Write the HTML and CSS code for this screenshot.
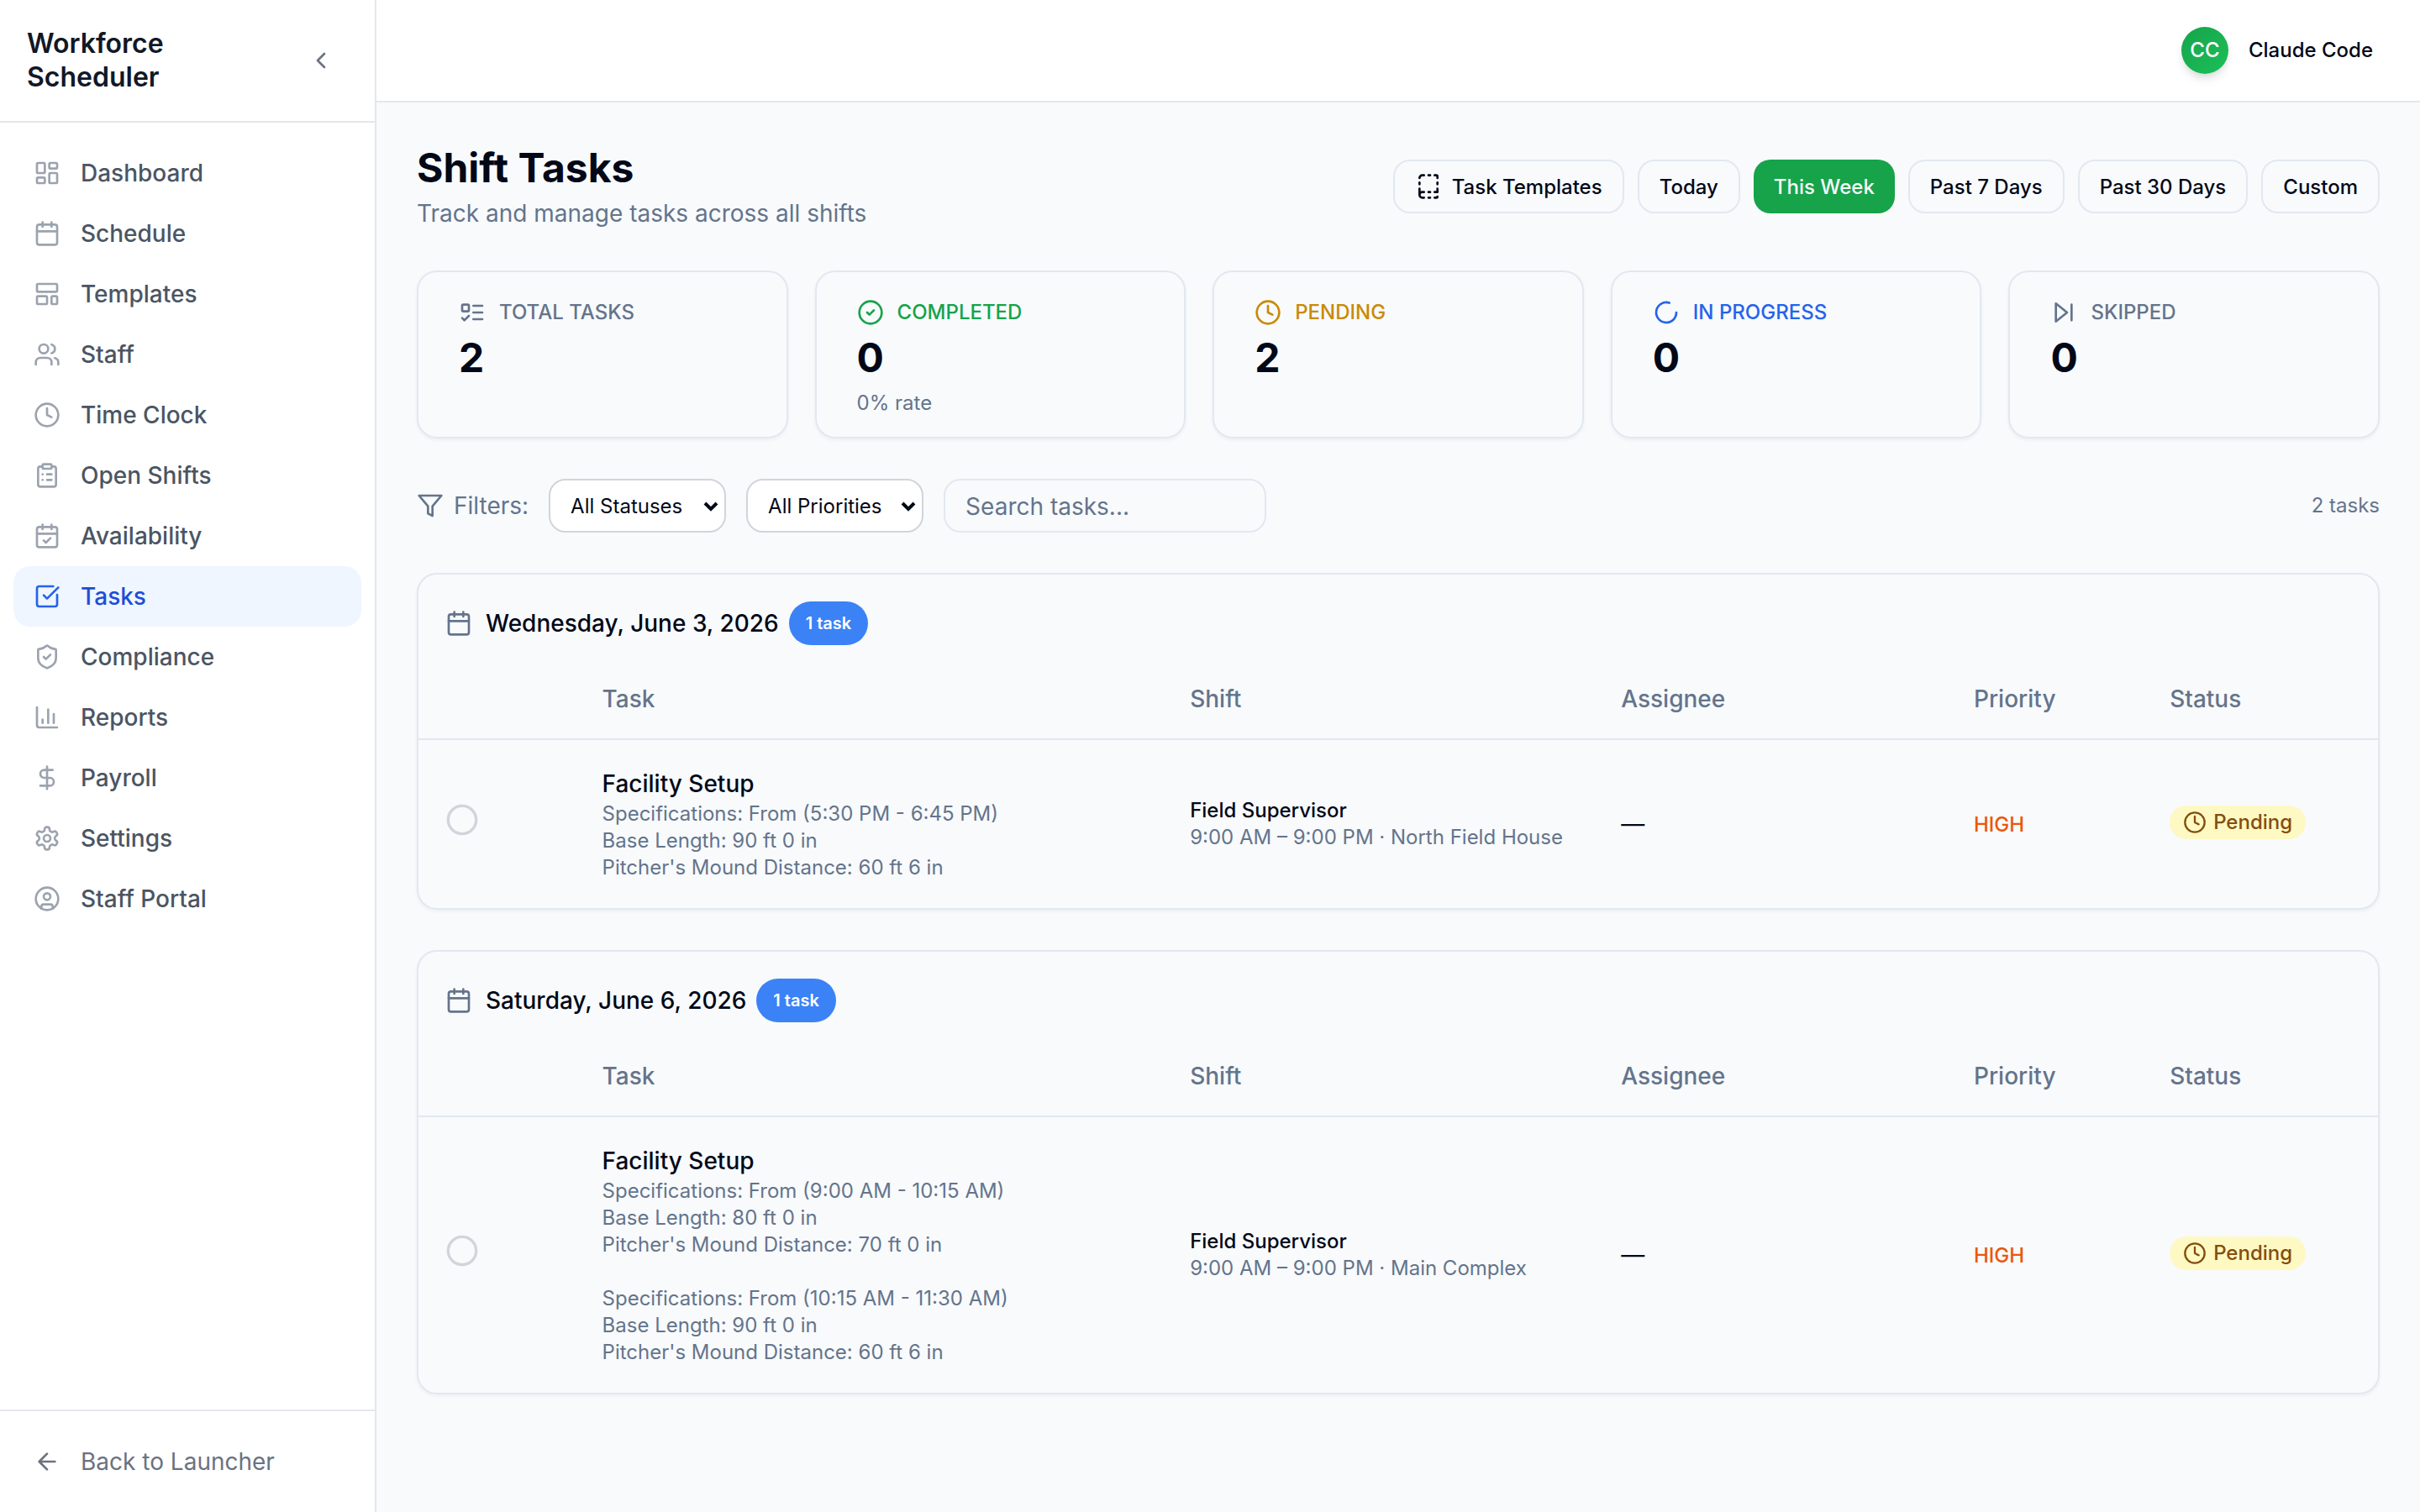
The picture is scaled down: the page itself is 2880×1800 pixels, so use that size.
FILE: index.html
```html
<!DOCTYPE html>
<html lang="en">
<head>
    <meta charset="UTF-8">
    <meta name="viewport" content="width=device-width, initial-scale=1.0">
    <title>Shift Tasks - Workforce Scheduler</title>
    <link rel="stylesheet" href="styles.css">
</head>
<body>
    <!-- Icons shared by more than one place -->
    <svg class="sprite" aria-hidden="true">
        <symbol id="icon-calendar" viewBox="0 0 24 24">
            <path d="M8 2v4M16 2v4M3 10h18"/>
            <rect x="3" y="4" width="18" height="18" rx="2"/>
        </symbol>
        <symbol id="icon-clock" viewBox="0 0 24 24">
            <circle cx="12" cy="12" r="10"/>
            <path d="M12 6v6l4 2"/>
        </symbol>
        <symbol id="icon-circle" viewBox="0 0 24 24">
            <circle cx="12" cy="12" r="10"/>
        </symbol>
    </svg>

    <div class="app">
        <aside class="sidebar">
            <div class="sidebar-header">
                <div class="brand">Workforce Scheduler</div>
                <button class="collapse-button" aria-label="Collapse sidebar">
                    <svg class="icon" viewBox="0 0 24 24"><path d="m15 18-6-6 6-6"/></svg>
                </button>
            </div>

            <nav class="nav">
                <a href="#" class="nav-link">
                    <svg class="icon" viewBox="0 0 24 24"><rect x="3" y="3" width="7" height="9" rx="1"/><rect x="14" y="3" width="7" height="5" rx="1"/><rect x="14" y="12" width="7" height="9" rx="1"/><rect x="3" y="16" width="7" height="5" rx="1"/></svg>
                    Dashboard
                </a>
                <a href="#" class="nav-link">
                    <svg class="icon"><use href="#icon-calendar"/></svg>
                    Schedule
                </a>
                <a href="#" class="nav-link">
                    <svg class="icon" viewBox="0 0 24 24"><rect x="3" y="3" width="18" height="7" rx="1"/><rect x="3" y="14" width="9" height="7" rx="1"/><rect x="16" y="14" width="5" height="7" rx="1"/></svg>
                    Templates
                </a>
                <a href="#" class="nav-link">
                    <svg class="icon" viewBox="0 0 24 24"><path d="M16 21v-2a4 4 0 0 0-4-4H6a4 4 0 0 0-4 4v2"/><circle cx="9" cy="7" r="4"/><path d="M22 21v-2a4 4 0 0 0-3-3.87M16 3.13a4 4 0 0 1 0 7.75"/></svg>
                    Staff
                </a>
                <a href="#" class="nav-link">
                    <svg class="icon"><use href="#icon-clock"/></svg>
                    Time Clock
                </a>
                <a href="#" class="nav-link">
                    <svg class="icon" viewBox="0 0 24 24"><rect x="8" y="2" width="8" height="4" rx="1"/><path d="M16 4h2a2 2 0 0 1 2 2v14a2 2 0 0 1-2 2H6a2 2 0 0 1-2-2V6a2 2 0 0 1 2-2h2M12 11h4M12 16h4M8 11h.01M8 16h.01"/></svg>
                    Open Shifts
                </a>
                <a href="#" class="nav-link">
                    <svg class="icon" viewBox="0 0 24 24"><path d="M8 2v4M16 2v4M3 10h18"/><rect x="3" y="4" width="18" height="18" rx="2"/><path d="m9 16 2 2 4-4"/></svg>
                    Availability
                </a>
                <a href="#" class="nav-link active" aria-current="page">
                    <svg class="icon" viewBox="0 0 24 24"><path d="M21 10.5V19a2 2 0 0 1-2 2H5a2 2 0 0 1-2-2V5a2 2 0 0 1 2-2h12.5"/><path d="m9 11 3 3L22 4"/></svg>
                    Tasks
                </a>
                <a href="#" class="nav-link">
                    <svg class="icon" viewBox="0 0 24 24"><path d="M20 13c0 5-3.5 7.5-7.66 8.95a1 1 0 0 1-.67-.01C7.5 20.5 4 18 4 13V6a1 1 0 0 1 1-1c2 0 4.5-1.2 6.24-2.72a1.17 1.17 0 0 1 1.52 0C14.51 3.81 17 5 19 5a1 1 0 0 1 1 1z"/><path d="m9 12 2 2 4-4"/></svg>
                    Compliance
                </a>
                <a href="#" class="nav-link">
                    <svg class="icon" viewBox="0 0 24 24"><path d="M3 3v16a2 2 0 0 0 2 2h16M18 17V9M13 17V5M8 17v-3"/></svg>
                    Reports
                </a>
                <a href="#" class="nav-link">
                    <svg class="icon" viewBox="0 0 24 24"><path d="M12 2v20M17 5H9.5a3.5 3.5 0 0 0 0 7h5a3.5 3.5 0 0 1 0 7H6"/></svg>
                    Payroll
                </a>
                <a href="#" class="nav-link">
                    <svg class="icon" viewBox="0 0 24 24"><path d="M12.22 2h-.44a2 2 0 0 0-2 2v.18a2 2 0 0 1-1 1.73l-.43.25a2 2 0 0 1-2 0l-.15-.08a2 2 0 0 0-2.73.73l-.22.38a2 2 0 0 0 .73 2.73l.15.1a2 2 0 0 1 1 1.72v.51a2 2 0 0 1-1 1.74l-.15.09a2 2 0 0 0-.73 2.73l.22.38a2 2 0 0 0 2.73.73l.15-.08a2 2 0 0 1 2 0l.43.25a2 2 0 0 1 1 1.73V20a2 2 0 0 0 2 2h.44a2 2 0 0 0 2-2v-.18a2 2 0 0 1 1-1.73l.43-.25a2 2 0 0 1 2 0l.15.08a2 2 0 0 0 2.73-.73l.22-.39a2 2 0 0 0-.73-2.73l-.15-.08a2 2 0 0 1-1-1.74v-.5a2 2 0 0 1 1-1.74l.15-.09a2 2 0 0 0 .73-2.73l-.22-.38a2 2 0 0 0-2.73-.73l-.15.08a2 2 0 0 1-2 0l-.43-.25a2 2 0 0 1-1-1.73V4a2 2 0 0 0-2-2z"/><circle cx="12" cy="12" r="3"/></svg>
                    Settings
                </a>
                <a href="#" class="nav-link">
                    <svg class="icon" viewBox="0 0 24 24"><circle cx="12" cy="12" r="10"/><circle cx="12" cy="10" r="3"/><path d="M7 20.66V19a2 2 0 0 1 2-2h6a2 2 0 0 1 2 2v1.66"/></svg>
                    Staff Portal
                </a>
            </nav>

            <div class="sidebar-footer">
                <a href="#" class="back-link">
                    <svg class="icon" viewBox="0 0 24 24"><path d="m12 19-7-7 7-7M19 12H5"/></svg>
                    Back to Launcher
                </a>
            </div>
        </aside>

        <div class="main">
            <header class="topbar">
                <div class="avatar">CC</div>
                <div class="user-name">Claude Code</div>
            </header>

            <main class="content">
                <div class="page-header">
                    <div>
                        <h1>Shift Tasks</h1>
                        <p class="subtitle">Track and manage tasks across all shifts</p>
                    </div>
                    <div class="actions">
                        <button class="button">
                            <svg class="icon" viewBox="0 0 24 24"><path d="M12 17h1.5M12 22h1.5M12 2h1.5M17.5 22H19a1 1 0 0 0 1-1M17.5 2H19a1 1 0 0 1 1 1v1.5M20 14v3h-2.5M20 8.5V10M4 10V8.5M4 19.5V14M4 4.5A2.5 2.5 0 0 1 6.5 2H8M8 22H6.5a1 1 0 0 1 0-5H8"/></svg>
                            Task Templates
                        </button>
                        <button class="button">Today</button>
                        <button class="button primary">This Week</button>
                        <button class="button">Past 7 Days</button>
                        <button class="button">Past 30 Days</button>
                        <button class="button">Custom</button>
                    </div>
                </div>

                <div class="stats">
                    <div class="card stat">
                        <div class="stat-label">
                            <svg class="icon" viewBox="0 0 24 24"><rect x="3" y="5" width="6" height="6" rx="1"/><path d="m3 17 2 2 4-4M13 6h8M13 12h8M13 18h8"/></svg>
                            TOTAL TASKS
                        </div>
                        <div class="stat-value">2</div>
                    </div>
                    <div class="card stat">
                        <div class="stat-label green">
                            <svg class="icon" viewBox="0 0 24 24"><circle cx="12" cy="12" r="10"/><path d="m9 12 2 2 4-4"/></svg>
                            COMPLETED
                        </div>
                        <div class="stat-value">0</div>
                        <div class="stat-note">0% rate</div>
                    </div>
                    <div class="card stat">
                        <div class="stat-label yellow">
                            <svg class="icon"><use href="#icon-clock"/></svg>
                            PENDING
                        </div>
                        <div class="stat-value">2</div>
                    </div>
                    <div class="card stat">
                        <div class="stat-label blue">
                            <svg class="icon" viewBox="0 0 24 24"><path d="M21 12a9 9 0 1 1-6.22-8.56"/></svg>
                            IN PROGRESS
                        </div>
                        <div class="stat-value">0</div>
                    </div>
                    <div class="card stat">
                        <div class="stat-label">
                            <svg class="icon" viewBox="0 0 24 24"><path d="M5 4l10 8-10 8zM19 5v14"/></svg>
                            SKIPPED
                        </div>
                        <div class="stat-value">0</div>
                    </div>
                </div>

                <div class="filters">
                    <div class="filters-label">
                        <svg class="icon" viewBox="0 0 24 24"><path d="M22 3H2l8 9.46V19l4 2v-8.54z"/></svg>
                        Filters:
                    </div>
                    <div class="select-wrap">
                        <select aria-label="Status">
                            <option>All Statuses</option>
                            <option>Pending</option>
                            <option>In Progress</option>
                            <option>Completed</option>
                            <option>Skipped</option>
                        </select>
                        <svg class="select-arrow" viewBox="0 0 18 12"><path d="m2 2 7 7 7-7"/></svg>
                    </div>
                    <div class="select-wrap">
                        <select aria-label="Priority">
                            <option>All Priorities</option>
                            <option>High</option>
                            <option>Medium</option>
                            <option>Low</option>
                        </select>
                        <svg class="select-arrow" viewBox="0 0 18 12"><path d="m2 2 7 7 7-7"/></svg>
                    </div>
                    <input type="text" class="search" placeholder="Search tasks..." aria-label="Search tasks">
                    <div class="count">2 tasks</div>
                </div>

                <section class="card day">
                    <div class="day-header">
                        <svg class="icon"><use href="#icon-calendar"/></svg>
                        <h2>Wednesday, June 3, 2026</h2>
                        <span class="badge">1 task</span>
                    </div>
                    <table>
                        <thead>
                            <tr>
                                <th class="col-check"></th>
                                <th class="col-task">Task</th>
                                <th class="col-shift">Shift</th>
                                <th class="col-assignee">Assignee</th>
                                <th class="col-priority">Priority</th>
                                <th class="col-status">Status</th>
                            </tr>
                        </thead>
                        <tbody>
                            <tr>
                                <td><button class="check-button" aria-label="Mark complete"><svg><use href="#icon-circle"/></svg></button></td>
                                <td>
                                    <div class="task-name">Facility Setup</div>
                                    <div class="details">Specifications: From (5:30 PM - 6:45 PM)
Base Length: 90 ft 0 in
Pitcher's Mound Distance: 60 ft 6 in</div>
                                </td>
                                <td>
                                    <div class="shift-role">Field Supervisor</div>
                                    <div class="details">9:00 AM – 9:00 PM · North Field House</div>
                                </td>
                                <td>—</td>
                                <td><span class="priority">HIGH</span></td>
                                <td><span class="status"><svg class="icon"><use href="#icon-clock"/></svg>Pending</span></td>
                            </tr>
                        </tbody>
                    </table>
                </section>

                <section class="card day">
                    <div class="day-header">
                        <svg class="icon"><use href="#icon-calendar"/></svg>
                        <h2>Saturday, June 6, 2026</h2>
                        <span class="badge">1 task</span>
                    </div>
                    <table>
                        <thead>
                            <tr>
                                <th class="col-check"></th>
                                <th class="col-task">Task</th>
                                <th class="col-shift">Shift</th>
                                <th class="col-assignee">Assignee</th>
                                <th class="col-priority">Priority</th>
                                <th class="col-status">Status</th>
                            </tr>
                        </thead>
                        <tbody>
                            <tr>
                                <td><button class="check-button" aria-label="Mark complete"><svg><use href="#icon-circle"/></svg></button></td>
                                <td>
                                    <div class="task-name">Facility Setup</div>
                                    <div class="details">Specifications: From (9:00 AM - 10:15 AM)
Base Length: 80 ft 0 in
Pitcher's Mound Distance: 70 ft 0 in

Specifications: From (10:15 AM - 11:30 AM)
Base Length: 90 ft 0 in
Pitcher's Mound Distance: 60 ft 6 in</div>
                                </td>
                                <td>
                                    <div class="shift-role">Field Supervisor</div>
                                    <div class="details">9:00 AM – 9:00 PM · Main Complex</div>
                                </td>
                                <td>—</td>
                                <td><span class="priority">HIGH</span></td>
                                <td><span class="status"><svg class="icon"><use href="#icon-clock"/></svg>Pending</span></td>
                            </tr>
                        </tbody>
                    </table>
                </section>
            </main>
        </div>
    </div>
</body>
</html>
```
FILE: styles.css
```css
* {
    box-sizing: border-box;
}

body {
    margin: 0;
    font-family: Inter, "Liberation Sans", sans-serif;
    font-size: 28px;
    line-height: 40px;
    color: #020817;
    background-color: #f8fafc;
}

h1, h2, p {
    margin: 0;
}

a {
    color: inherit;
    text-decoration: none;
}

button, input, select {
    font-family: inherit;
    color: inherit;
}

button {
    cursor: pointer;
}

.sprite {
    display: none;
}

.icon {
    width: 32px;
    height: 32px;
    flex-shrink: 0;
}

svg {
    fill: none;
    stroke: currentColor;
    stroke-width: 2;
    stroke-linecap: round;
    stroke-linejoin: round;
}

.app {
    display: flex;
    min-height: 100vh;
}

/* Sidebar */
.sidebar {
    display: flex;
    flex-direction: column;
    width: 448px;
    flex-shrink: 0;
    background-color: #fff;
    border-right: 2px solid #e5e7eb;
}

.sidebar-header {
    display: flex;
    align-items: center;
    justify-content: space-between;
    padding: 32px;
    border-bottom: 2px solid #e5e7eb;
}

.brand {
    width: min-content;
    font-size: 32px;
    font-weight: 600;
    color: #111827;
}

.collapse-button {
    display: flex;
    padding: 16px;
    border: none;
    background: none;
    color: #6b7280;
}

.nav {
    flex: 1;
    padding: 24px 16px;
}

.nav-link, .back-link {
    display: flex;
    align-items: center;
    gap: 24px;
    padding: 16px 24px;
    border-radius: 20px;
}

.nav-link {
    font-weight: 500;
    color: #4b5563;
}

.nav-link .icon {
    color: #9ca3af;
}

.nav-link.active {
    background-color: #eff6ff;
    color: #1d4ed8;
}

.nav-link.active .icon {
    color: #2563eb;
}

.sidebar-footer {
    padding: 24px 16px;
    border-top: 2px solid #e5e7eb;
}

.back-link {
    color: #6b7280;
}

/* Main area */
.main {
    flex: 1;
    min-width: 0;
}

.topbar {
    display: flex;
    align-items: center;
    justify-content: flex-end;
    gap: 24px;
    padding: 32px 56px;
    background-color: #fff;
    border-bottom: 2px solid #e5e7eb;
    font-size: 24px;
    font-weight: 500;
}

.avatar {
    display: flex;
    align-items: center;
    justify-content: center;
    width: 56px;
    height: 56px;
    border-radius: 50%;
    background: linear-gradient(135deg, #16a34a, #1cc05a);
    box-shadow: 0 8px 12px -2px rgba(0, 0, 0, 0.1), 0 4px 8px -4px rgba(0, 0, 0, 0.1);
    color: #fff;
}

.content {
    display: flex;
    flex-direction: column;
    gap: 48px;
    padding: 48px;
}

.page-header {
    display: flex;
    align-items: center;
    justify-content: space-between;
}

h1 {
    font-size: 48px;
    font-weight: 700;
    line-height: 60px;
}

.subtitle {
    margin-top: 4px;
    color: #64748b;
}

.actions {
    display: flex;
    gap: 16px;
}

.button {
    display: flex;
    align-items: center;
    gap: 12px;
    height: 64px;
    padding: 0 24px;
    border: 2px solid #e2e8f0;
    border-radius: 20px;
    background-color: #f8fafc;
    font-size: 24px;
    font-weight: 500;
}

.button.primary {
    border: none;
    background-color: #16a34a;
    color: #f8fafc;
}

.card {
    border: 2px solid #e2e8f0;
    border-radius: 24px;
    box-shadow: 0 2px 4px rgba(0, 0, 0, 0.05);
}

/* Stat cards */
.stats {
    display: grid;
    grid-template-columns: repeat(5, 1fr);
    gap: 32px;
}

.stat {
    padding: 24px 48px;
}

.stat-label {
    display: flex;
    align-items: center;
    gap: 16px;
    height: 48px;
    font-size: 24px;
    font-weight: 500;
    color: #64748b;
}

.stat-label.green {
    color: #16a34a;
}

.stat-label.yellow {
    color: #ca8a04;
}

.stat-label.blue {
    color: #2563eb;
}

.stat-value {
    font-size: 48px;
    font-weight: 700;
    line-height: 60px;
}

.stat-note {
    margin-top: 8px;
    font-size: 24px;
    line-height: 32px;
    color: #64748b;
}

/* Filters */
.filters {
    display: flex;
    align-items: center;
    gap: 24px;
}

.filters-label {
    display: flex;
    align-items: center;
    gap: 12px;
    color: #64748b;
}

.select-wrap {
    position: relative;
}

select {
    display: block;
    width: 211px;
    height: 64px;
    padding: 0 24px;
    border: 2px solid #d1d5db;
    border-radius: 20px;
    background-color: #fff;
    font-size: 24px;
    appearance: none;
}

.select-arrow {
    position: absolute;
    top: 27px;
    right: 9px;
    width: 18px;
    height: 12px;
    stroke-width: 4;
    stroke-linecap: butt;
    stroke-linejoin: miter;
    pointer-events: none;
}

.search {
    width: 384px;
    height: 64px;
    padding: 2px 24px 0;
    border: 2px solid #e2e8f0;
    border-radius: 20px;
    background: none;
    font-size: 28px;
}

.search::placeholder {
    color: #64748b;
}

.count {
    margin-left: auto;
    font-size: 24px;
    color: #64748b;
}

/* Tasks grouped by day */
.day-header {
    display: flex;
    align-items: center;
    padding: 32px 32px 16px;
}

.day-header .icon {
    margin-right: 16px;
    color: #64748b;
}

h2 {
    font-size: 28px;
    font-weight: 500;
}

.badge {
    margin-left: 12px;
    padding: 6px 20px;
    border-radius: 26px;
    background-color: #3b82f6;
    color: #fff;
    font-size: 20px;
    font-weight: 600;
}

table {
    width: 100%;
    border-spacing: 0;
    table-layout: fixed;
}

th {
    height: 97px;
    padding: 0 32px;
    border-bottom: 2px solid #e2e8f0;
    font-weight: 500;
    text-align: left;
    color: #64748b;
}

.col-check {
    width: 8%;
}

.col-task {
    width: 30%;
}

.col-shift {
    width: 22%;
}

.col-assignee {
    width: 18%;
}

.col-priority {
    width: 10%;
}

.col-status {
    width: 12%;
}

td {
    padding: 32px;
    vertical-align: middle;
}

.check-button {
    padding: 0;
    border: none;
    background: none;
    color: #d1d5db;
}

.check-button svg {
    width: 40px;
    height: 40px;
}

.task-name {
    font-weight: 500;
}

.details {
    font-size: 24px;
    line-height: 32px;
    white-space: pre-line;
    color: #64748b;
}

.shift-role {
    font-size: 24px;
    font-weight: 500;
    line-height: 32px;
}

.priority {
    font-size: 24px;
    font-weight: 500;
    color: #ea580c;
}

.status {
    display: inline-flex;
    align-items: center;
    gap: 8px;
    padding: 4px 16px;
    border-radius: 20px;
    background-color: #fef9c3;
    color: #854d0e;
    font-size: 24px;
    font-weight: 500;
    line-height: 32px;
}

.status .icon {
    width: 28px;
    height: 28px;
}
```
